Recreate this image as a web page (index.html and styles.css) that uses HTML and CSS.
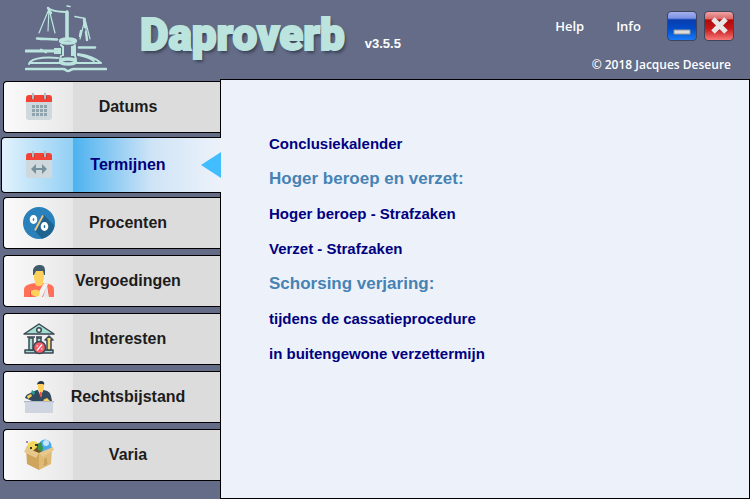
FILE: index.html
```html
<!DOCTYPE html>
<html lang="nl">
<head>
    <meta charset="UTF-8">
    <meta name="viewport" content="width=device-width, initial-scale=1.0">
    <title>Daproverb</title>
    <link rel="stylesheet" href="styles.css">
</head>
<body>

<header class="header">
    <svg class="logo" viewBox="0 0 82 68" aria-hidden="true">
        <g fill="none" stroke="#bbe4de" stroke-linecap="round">
            <path stroke-width="2" d="M23 3C30 8 36 6 42 7"/>
            <path stroke-width="1.600" d="M42 1l3 .5M50 11.500c4 1 7 1 10 2"/>
            <path stroke-width="3.600" d="M42 7v27"/>
            <path stroke-width="1.200" d="M24 4L14 28M24 4l-1 22M24 4l6 24M60 14l-5 20M60 14l2 21M60 14l5 20"/>
            <path stroke-width="2.400" d="M23 3l3 5M59 15l1 7M61 27l1 8M55 31l1-5"/>
            <path stroke-width="2.600" d="M12 33.500c7 1 13 0 20 1M54 42.500h16"/>
            <path stroke-width="3" d="M1 46h29"/>
            <path stroke-width="2" d="M16 44.500l5 3M5 57c6-5 16-5 28-4M5 58h30M5 57l-1 2M50 58h26M53 49c8 1 16 3 23 9M53 50c7 1 12 3 16 6"/>
            <path stroke-width="2.600" d="M1 64h37c3 0 3 2 5 2s3-2 6-2h32"/>
            <ellipse stroke-width="3.400" cx="43" cy="36" rx="7.500" ry="2"/>
            <ellipse stroke-width="3.400" cx="43" cy="56.500" rx="7.500" ry="2.500"/>
            <path stroke-width="2" d="M36 40l2 2M50 40l-2 2M36 51l-1 3M50 51l1 3"/>
        </g>
        <path fill="#bbe4de" d="M29 43h7v6h-7zM46 41h5v10h-5zM37 41h2v10h-2z"/>
        <path fill="#3f7da8" d="M41 45h1v2h-1z"/>
    </svg>
    <h1 class="title">Daproverb</h1>
    <span class="version">v3.5.5</span>
    <div class="tools">
        <div class="menu">
            <a href="#">Help</a>
            <a href="#">Info</a>
            <div class="window-buttons">
                <button class="win-btn minimize" type="button" aria-label="Minimaliseren">
                    <svg viewBox="0 0 28 28"><path fill="#ddd" stroke="#999" stroke-width="1" d="M6 18h16v4H6z"/></svg>
                </button>
                <button class="win-btn close" type="button" aria-label="Sluiten">
                    <svg viewBox="0 0 28 28"><path fill="none" stroke="#e6e6e6" stroke-width="5" d="M8 7l13 13M21 7l-13 13"/></svg>
                </button>
            </div>
        </div>
        <div class="copyright">© 2018 Jacques Deseure</div>
    </div>
</header>

<div class="content">
    <nav class="sidebar">
        <button class="tab" type="button">
            <svg class="icon" viewBox="0 0 32 32">
                <path fill="#cfd8dc" d="M3 10h26v16a3 3 0 0 1-3 3H6a3 3 0 0 1-3-3z"/>
                <path fill="#f44336" d="M6 4h20a3 3 0 0 1 3 3v4H3V7a3 3 0 0 1 3-3z"/>
                <path fill="#b3302b" d="M8 5h4v3H8zM20 5h4v3h-4z"/>
                <path stroke="#b0bec5" stroke-width="2.400" stroke-linecap="round" d="M10 3v4M22 3v4"/>
                <path stroke="#90a4ae" stroke-width="3" stroke-dasharray="3 1" d="M9 15.500h15M9 19.500h15M9 23.500h15"/>
            </svg>
            <span class="label">Datums</span>
        </button>
        <button class="tab active" type="button">
            <svg class="icon" viewBox="0 0 32 32">
                <path fill="#cfd8dc" d="M3 10h26v16a3 3 0 0 1-3 3H6a3 3 0 0 1-3-3z"/>
                <path fill="#f44336" d="M6 4h20a3 3 0 0 1 3 3v4H3V7a3 3 0 0 1 3-3z"/>
                <path fill="#b3302b" d="M8 5h4v3H8zM20 5h4v3h-4z"/>
                <path stroke="#b0bec5" stroke-width="2.400" stroke-linecap="round" d="M10 3v4M22 3v4"/>
                <path fill="#78909c" d="M8 20l5-5v4h6v-4l5 5-5 5v-4h-6v4z"/>
            </svg>
            <span class="label">Termijnen</span>
        </button>
        <button class="tab" type="button">
            <svg class="icon" viewBox="0 0 32 32">
                <circle cx="16" cy="16" r="16" fill="#2980ba"/>
                <path fill="#20638f" d="M21 8l10.500 10.500A16 16 0 0 1 19 31.700L12 24z"/>
                <path stroke="#f0c480" stroke-width="1.800" d="M20 8.500l-8 15"/>
                <g fill="none" stroke="#fff" stroke-width="3">
                    <ellipse cx="10.500" cy="12.500" rx="2.300" ry="3"/>
                    <ellipse cx="21.500" cy="19.500" rx="2.300" ry="3"/>
                </g>
            </svg>
            <span class="label">Procenten</span>
        </button>
        <button class="tab" type="button">
            <svg class="icon" viewBox="0 0 32 32">
                <path fill="#ff7058" d="M1 32v-7c0-4 3-5 6-6l5-1h8l6 1c3 1 5 2 5 6v7z"/>
                <path fill="#f1543f" d="M7 26h1v6H7zM25 26h1v6h-1z"/>
                <path fill="#ffd15c" d="M12 14h8v5c-2 3-6 3-8 0z"/>
                <path fill="#f2f2f2" d="M21 18l4 1-6 13h-6z"/>
                <path fill="#e6e9ee" d="M24 20l2 12h-6z"/>
                <path fill="#ffd15c" d="M8 26c3-2 6-2 9 0l-1 5c-3 1-6 0-8-2z"/>
                <path fill="#ffd15c" d="M11 5h10v7c0 4-2 6-5 6s-5-2-5-6z"/>
                <path fill="#40596b" d="M10 10V5c1-4 4-5 7-5 4 0 5 3 5 5v5h-1l-1-4h-7l-2 4z"/>
            </svg>
            <span class="label">Vergoedingen</span>
        </button>
        <button class="tab" type="button">
            <svg class="icon" viewBox="0 0 32 32">
                <g stroke="#3d4654" stroke-width="1.500" stroke-linejoin="round">
                    <path fill="#a0dfcf" d="M1 11L16 1l15 10zM2 27h28v3H2z"/>
                    <circle cx="16" cy="7" r="2.300" fill="#e8f3f0"/>
                    <path fill="#a0dfcf" d="M6 15h4v12H6zM14 15h4v6h-4z"/>
                    <path fill="#f2d974" d="M24 27V17h-2l4-4 4 4h-2v10z"/>
                    <path fill="none" d="M4 14h8M13 14h6"/>
                    <circle cx="16.500" cy="24.500" r="6" fill="#f45b66"/>
                </g>
                <path fill="none" stroke="#fff" stroke-width="1.200" d="M19 21.500l-5 6M13.500 23h1.500M18 26h1.500"/>
            </svg>
            <span class="label">Interesten</span>
        </button>
        <button class="tab" type="button">
            <svg class="icon" viewBox="0 0 32 32">
                <path fill="#324a5e" d="M2 17c1-4 4-4 7-6l5-2h7c4 1 6 2 7 6l1 5H9z"/>
                <path fill="#fff" d="M15 9h5l-2 7z"/>
                <path fill="#f1543f" d="M17 10h1.500l.5 3-1 4-1.500-4z"/>
                <path fill="#ffd15c" d="M15 3h6v4c0 2-1 4-3 4s-3-2-3-4z"/>
                <path fill="#26394a" d="M14 4c0-3 2-4 4-4s4 1 3 4l-1-1h-5z"/>
                <path fill="#2b9e91" d="M9 9l3 2-1 3-3-2z"/>
                <path fill="#ffd15c" d="M4 15l4-2 1 2-4 3zM20 19l4-2 3 3h-6z"/>
                <path fill="#acb9c7" d="M1 20h30v1.500H1z"/>
                <path fill="#ced5e0" d="M2 21h28v11H2z"/>
            </svg>
            <span class="label">Rechtsbijstand</span>
        </button>
        <button class="tab" type="button">
            <svg class="icon" viewBox="0 0 32 32">
                <path fill="#765028" d="M3 8l14-4 13 5-12 7z"/>
                <circle cx="22" cy="7" r="6.500" fill="#4aa9e8"/>
                <circle cx="23" cy="4" r="3" fill="#c4e6fb"/>
                <path fill="#399447" d="M15 5l3-2 2 6-1 4-4-2z"/>
                <path fill="#f3d55b" d="M5 4l5-2 4 1v5l-4 4-6-3z"/>
                <path fill="#343434" d="M7 8h2v2H7zM12 5h3v2h-3z"/>
                <path fill="#a883b8" d="M3 2h2v2H3z"/>
                <path fill="#cfa55e" d="M3 9l13 5v17L4 25z"/>
                <path fill="#dfba77" d="M16 14l13-5-1 16-12 6z"/>
                <path fill="#e7c88c" d="M3 9l13 5-3 5-12-6zM30 8l-14 6 4 4 11-7z"/>
                <path fill="#cda25b" d="M21 20l3-1v4l1 1-3 3-2-1 1-1z"/>
            </svg>
            <span class="label">Varia</span>
        </button>
    </nav>
    <main class="panel">
        <a href="#">Conclusiekalender</a>
        <h2>Hoger beroep en verzet:</h2>
        <a href="#">Hoger beroep - Strafzaken</a>
        <a href="#">Verzet - Strafzaken</a>
        <h2>Schorsing verjaring:</h2>
        <a href="#">tijdens de cassatieprocedure</a>
        <a href="#">in buitengewone verzettermijn</a>
    </main>
</div>

</body>
</html>
```

FILE: styles.css
```css
* {
    box-sizing: border-box;
}
body {
    font-family: "Liberation Sans", Arial, sans-serif;
    font-weight: bold;
    background-color: #646c87;
    margin: 0;
    min-height: 100vh;
    display: flex;
    flex-direction: column;
}
a {
    color: inherit;
    text-decoration: none;
}
.header {
    display: flex;
    align-items: flex-start;
    height: 79px;
    padding-left: 25px;
    color: #fff;
}
.logo {
    width: 82px;
    height: 68px;
    margin-top: 5px;
}
.title {
    margin: 7px 0 0 33px;
    font-family: Impact, Roboto, sans-serif;
    font-weight: 900;
    font-size: 44px;
    line-height: 56px;
    color: #bbe4de;
    -webkit-text-stroke: 2px #bbe4de;
    text-shadow: 2px 3px 3px #3b4258;
}
.version {
    margin: 36px 0 0 20px;
    font-size: 13px;
    line-height: 16px;
}
.tools {
    margin-left: auto;
    padding: 11px 16px 0 0;
    font-family: "Open Sans", "Segoe UI", sans-serif;
    font-size: 13px;
    font-weight: 600;
}
.menu {
    display: flex;
    justify-content: flex-end;
    align-items: center;
    gap: 32px;
    margin-bottom: 14px;
}
.window-buttons {
    display: flex;
    gap: 7px;
    margin-left: -6px;
}
.win-btn {
    width: 30px;
    height: 30px;
    padding: 0;
    border: 1px solid #40455c;
    border-radius: 4px;
    cursor: pointer;
}
.win-btn svg {
    display: block;
}
.minimize {
    background: linear-gradient(#a3b1ee, #7c92e2 22%, #0a3cae 28%, #004cc8 60%, #1a7af5);
}
.close {
    background: linear-gradient(#f0a3a3, #d96868 25%, #b00808 28%, #c81818 60%, #f87878);
}
.copyright {
    padding-right: 3px;
    font-size: 12px;
    line-height: 20px;
    text-align: right;
}
.content {
    display: flex;
    flex: 1;
}
.sidebar {
    display: flex;
    flex-direction: column;
    gap: 6px;
    width: 220px;
    padding: 2px 0 0 3px;
}
.tab {
    display: flex;
    align-items: center;
    height: 52px;
    padding: 0 19px;
    border: 1px solid #000;
    border-right: none;
    border-radius: 4px 0 0 4px;
    background: linear-gradient(to right, #fafafa, #e8e8e8 69px, #dcdcdc 69px);
    font: bold 16px "Liberation Sans", Arial, sans-serif;
    color: #1c1c1c;
    cursor: pointer;
}
.icon {
    flex: none;
    width: 32px;
    height: 32px;
}
.label {
    flex: 1;
    text-align: center;
    white-space: nowrap;
}
.active {
    position: relative;
    height: 56px;
    margin: -2px -1px -2px -2px;
    padding: 0 20px 0 21px;
    background: linear-gradient(to right, #e2f2fc, #92cff5 71px, #4cb2ef 71px, #cfe4f7 150px, #edf2fa);
    color: #00007c;
}
.active::after {
    content: "";
    position: absolute;
    right: 0;
    top: 14px;
    border: solid transparent;
    border-width: 13px 20px 13px 0;
    border-right-color: #42bdff;
}
.panel {
    display: flex;
    flex: 1;
    flex-direction: column;
    align-items: flex-start;
    padding: 46px 48px;
    border: 1px solid #000;
    background-color: #edf2fa;
    font-size: 15px;
    line-height: 35px;
    color: #000080;
}
.panel h2 {
    margin: 0;
    font-size: 17px;
    line-height: 35px;
    color: #4682b4;
}
```
